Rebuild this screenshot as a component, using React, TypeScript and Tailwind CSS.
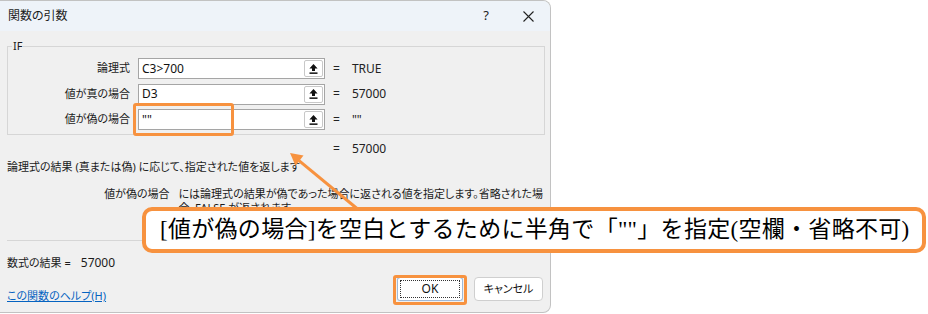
import React from "react";

const ORANGE = "border-[#f7923f]";

const ROWS = [
  { label: "論理式", value: "C3>700", result: "TRUE" },
  { label: "値が真の場合", value: "D3", result: "57000" },
  { label: "値が偽の場合", value: '""', result: '""' },
];

function PickIcon() {
  return (
    <svg width="9" height="10" viewBox="0 0 9 10" fill="#111">
      <path d="M4.5 0 L8.6 4.4 H6 V7 H3 V4.4 H0.4 Z" />
      <rect x="0.5" y="8.4" width="8" height="1.5" />
    </svg>
  );
}

function ArgRow({ label, value, result }: { label: string; value: string; result: string }) {
  return (
    <div className="flex items-center h-[21px]">
      <div className="w-[122px] text-right text-[11px] text-[#1b1b1b]">{label}</div>
      <div className="ml-[8px] w-[187px] h-[21px] flex items-center bg-white border border-[#a5a5a5]">
        <span className="pl-[3px] text-[12px] text-[#111]">{value}</span>
        <div className="ml-auto mr-[1px] w-[19px] h-[17px] flex items-center justify-center bg-white border border-[#c8c8c8] rounded-[2px]">
          <PickIcon />
        </div>
      </div>
      <span className="ml-[8px] text-[12px] text-[#222]">=</span>
      <span className="ml-[12px] text-[12px] text-[#222]">{result}</span>
    </div>
  );
}

function Dialog() {
  return (
    <div className="w-[551px] h-[313px] flex flex-col bg-[#f0f0f0] border border-l-0 border-[#c2c2c2] rounded-tr-[8px] rounded-br-[8px] overflow-hidden [font-feature-settings:'palt']">
      {/* Title bar */}
      <div className="h-[30px] flex items-center bg-[#eef3f9] pl-[8px]">
        <span className="text-[12px] text-[#1b1b1b]">関数の引数</span>
        <div className="ml-auto flex items-center h-full">
          <div className="w-[40px] flex justify-center text-[13px] text-[#222]">?</div>
          <div className="w-[44px] flex justify-center">
            <svg width="11" height="11" viewBox="0 0 11 11" stroke="#222" strokeWidth="1.1">
              <path d="M0.5 0.5 L10.5 10.5 M10.5 0.5 L0.5 10.5" />
            </svg>
          </div>
        </div>
      </div>

      <div className="flex flex-col px-[7px]">
        {/* Group box */}
        <fieldset className="mt-[8px] border border-[#d6d6d6] pb-[4px] w-[538px]">
          <legend className="ml-[4px] px-[1px] text-[11px] leading-[14px] text-[#1b1b1b]">IF</legend>
          <div className="flex flex-col gap-[4.5px] pt-[5px]">
            {ROWS.map((r) => (
              <ArgRow key={r.label} {...r} />
            ))}
          </div>
        </fieldset>

        <div className="mt-[6px] h-[16px] flex items-center pl-[326px] text-[12px] text-[#222]">
          <span>=</span>
          <span className="ml-[12px]">57000</span>
        </div>

        <div className="mt-[2px] h-[16px] flex items-center text-[11px] text-[#1b1b1b]">
          論理式の結果 (真または偽) に応じて、指定された値を返します
        </div>

        <div className="mt-[12px] flex text-[11px] leading-[14px] text-[#1b1b1b]">
          <div className="w-[189px] text-right">値が偽の場合</div>
          <div className="ml-[9px] flex flex-col whitespace-nowrap">
            <span>には論理式の結果が偽であった場合に返される値を指定します。省略された場</span>
            <span>合、FALSE が返されます。</span>
          </div>
        </div>

        <div className="mt-[25px] w-[538px] border-t border-[#d6d6d6]" />

        <div className="mt-[14px] h-[16px] flex items-center text-[11px] text-[#1b1b1b]">
          <span>数式の結果 =</span>
          <span className="ml-[10px] text-[12px]">57000</span>
        </div>

        <div className="mt-[6px] flex items-start">
          <a className="mt-[12px] text-[11px] leading-[14px] text-[#0563c1] underline">この関数のヘルプ(H)</a>
          <div className="ml-auto flex gap-[11px]">
            <div className="w-[66px] h-[24px] flex items-center justify-center bg-white border border-[#9fb9d8] border-t-[#2a72c8] rounded-[3px] p-[2px]">
              <div className="w-full h-full flex items-center justify-center border border-dotted border-[#333] text-[12px] text-[#111]">
                OK
              </div>
            </div>
            <div className="w-[69px] h-[24px] flex items-center justify-center bg-white border border-[#cfcfcf] rounded-[4px] text-[11px] text-[#111]">
              キャンセル
            </div>
          </div>
        </div>
      </div>
    </div>
  );
}

export default function App() {
  return (
    <div className="relative w-[928px] h-[314px] bg-white overflow-hidden [font-family:'Noto_Sans','Noto_Sans_CJK_JP',sans-serif]">
      <div className="flex h-full">
        <Dialog />
      </div>

      {/* highlight around the 値が偽の場合 input */}
      <div className={`absolute left-[133px] top-[103px] w-[101px] h-[33px] border-[3px] ${ORANGE} rounded-[3px]`} />

      {/* highlight around OK */}
      <div className={`absolute left-[393px] top-[275px] w-[74px] h-[30px] border-[3px] ${ORANGE} rounded-[3px]`} />

      {/* arrow */}
      <svg className="absolute left-0 top-0 pointer-events-none" width="928" height="314">
        <line x1="360" y1="211" x2="299" y2="160.6" stroke="#f7923f" strokeWidth="3" />
        <polygon points="290,153 303.5,155.5 295.5,165.8" fill="#f7923f" />
      </svg>

      {/* callout */}
      <div className="absolute left-[142px] top-[207px] w-[784px] h-[46px] flex items-center pl-[14px] bg-white border-[4px] border-[#f7923f] rounded-[10px] text-[23px] tracking-[0.3px] text-black whitespace-nowrap [font-family:'Liberation_Serif','Noto_Sans_CJK_JP',serif]">
        [値が偽の場合]を空白とするために半角で「""」を指定(空欄・省略不可)
      </div>
    </div>
  );
}
